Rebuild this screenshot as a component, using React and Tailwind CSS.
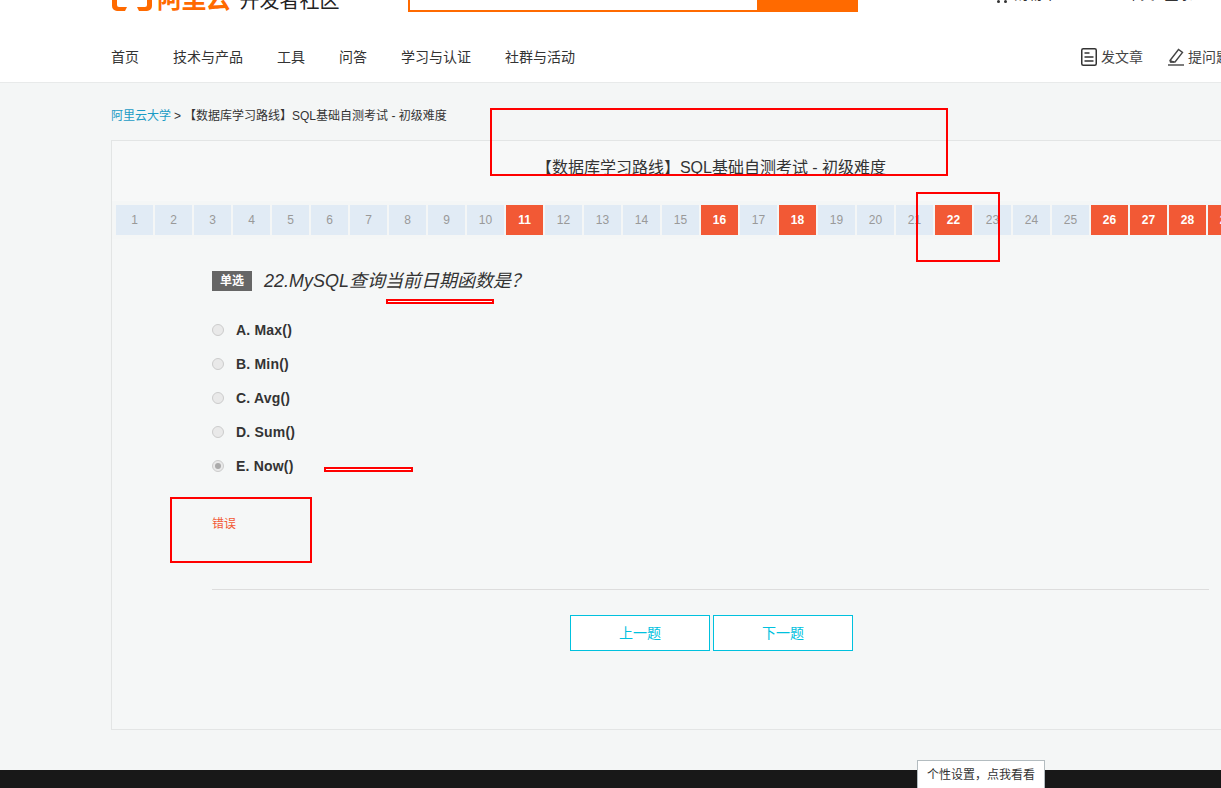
import React from "react";

const FONT = "font-['Liberation_Sans','Noto_Sans_CJK_SC',sans-serif]";
const ACTIVE = [11, 16, 18, 22, 26, 27, 28, 29];
const NAV = ["首页", "技术与产品", "工具", "问答", "学习与认证", "社群与活动"];
const OPTIONS = [
  { label: "A. Max()" },
  { label: "B. Min()" },
  { label: "C. Avg()" },
  { label: "D. Sum()" },
  { label: "E. Now()", checked: true },
];

const Logo = () => (
  <svg width="42" height="40" viewBox="0 0 42 40" className="shrink-0">
    <path
      d="M14 8H6a5 5 0 0 0-5 5v21a5 5 0 0 0 5 5h8l2-4H8a2 2 0 0 1-2-2V14a2 2 0 0 1 2-2h6zM28 8h8a5 5 0 0 1 5 5v21a5 5 0 0 1-5 5h-8l-2-4h8a2 2 0 0 0 2-2V14a2 2 0 0 0-2-2h-6z"
      fill="#ff6a00"
    />
  </svg>
);

const DocIcon = () => (
  <svg width="16" height="18" viewBox="0 0 16 18" fill="none" stroke="#333" className="shrink-0">
    <rect x="0.75" y="0.75" width="14.5" height="16.5" rx="1.5" strokeWidth="1.5" />
    <path d="M3.5 5h5M3.5 9h9M3.5 13h9" strokeWidth="1.5" />
  </svg>
);

const PenIcon = () => (
  <svg width="16" height="18" viewBox="0 0 16 18" fill="none" stroke="#444" className="shrink-0">
    <path d="M2 12.5 10.5 1.5l4 3L7 14H2.5z" strokeWidth="1.4" />
    <path d="M2.5 12.5 6 14 2.5 14z" fill="#444" />
    <path d="M0 17h16" strokeWidth="1.4" />
  </svg>
);

const Marker = ({ className }) => (
  <div className={`absolute border-2 border-[#ff0000] ${className}`} />
);

export default function App() {
  return (
    <div className={`relative h-[788px] w-[1221px] overflow-hidden bg-[#f4f6f6] text-[#333] ${FONT}`}>
      <header className="h-[83px] overflow-hidden border-b border-[#e8eaea] bg-white">
        <div className="-mt-[28px] flex h-[40px] items-end pl-[111px]">
          <Logo />
          <span className="ml-[4px] shrink-0 text-[25px] leading-[25px] font-bold tracking-[-0.5px] text-[#ff6a00]">阿里云</span>
          <span className="ml-[9px] shrink-0 text-[20px] leading-[22px] text-[#222]">开发者社区</span>
          <div className="ml-[68px] flex h-[40px] w-[450px] shrink-0">
            <div className="w-[349px] border-b-2 border-l-2 border-[#ff6a00] bg-white" />
            <div className="w-[101px] bg-[#ff6a00]" />
          </div>
          <div className="mb-[8px] ml-[139px] flex h-[30px] shrink-0 items-end text-[14px] leading-[20px] whitespace-nowrap text-[#333]">
            <span className="mb-[1px] flex w-[18px] gap-[4px]">
              <span className="h-[3px] w-[3px] rounded-full bg-[#333]" />
              <span className="h-[3px] w-[3px] rounded-full bg-[#333]" />
            </span>
            <span>购物车</span>
            <span className="ml-[70px]">中文</span>
            <span className="ml-[10px]">登录</span>
          </div>
        </div>
        <nav className="mt-[32px] flex h-[26px] items-center pl-[111px] text-[14px] whitespace-nowrap">
          {NAV.map((item) => (
            <a key={item} className="mr-[34px] shrink-0 leading-[26px] text-[#333]">
              {item}
            </a>
          ))}
          <a className="ml-[472px] flex shrink-0 items-center gap-[4px] text-[#444]">
            <DocIcon />
            发文章
          </a>
          <a className="ml-[25px] flex shrink-0 items-center gap-[4px] text-[#444]">
            <PenIcon />
            提问题
          </a>
        </nav>
      </header>

      <main className="pl-[111px]">
        <div className="flex h-[57px] items-center pt-[8px] text-[12px] text-[#333]">
          <a className="text-[#1b9bc5]">阿里云大学</a>
          <span className="mx-[3px]">&gt;</span>
          <span>【数据库学习路线】SQL基础自测考试 - 初级难度</span>
        </div>

        <section className="flex h-[590px] w-[1200px] flex-col border border-[#e3e5e5] bg-[#f7f8f8]">
          <h1 className="flex h-[60px] items-end justify-center pb-[23px] text-[16px] leading-[20px] font-normal text-[#333]">
            【数据库学习路线】SQL基础自测考试 - 初级难度
          </h1>

          <div className="flex h-[38px] gap-[2px] overflow-hidden bg-[#f4f6f6] py-[4px] pl-[4px]">
            {Array.from({ length: 30 }, (_, i) => i + 1).map((n) => (
              <div
                key={n}
                className={
                  ACTIVE.includes(n)
                    ? "flex h-[30px] w-[37px] shrink-0 items-center justify-center bg-[#f25935] text-[12px] font-bold text-white"
                    : "flex h-[30px] w-[37px] shrink-0 items-center justify-center bg-[#e1ebf5] text-[12px] text-[#999]"
                }
              >
                {n}
              </div>
            ))}
          </div>

          <div className="flex-1 bg-[#f5f7f7] pl-[100px] pr-[101px]">
            <div className="mb-[12px] mt-[22px] flex h-[40px] items-center">
              <span className="flex h-[20px] w-[40px] items-center justify-center bg-[#666] text-[12px] font-bold text-white">
                单选
              </span>
              <span className="ml-[12px] text-[18px] italic text-[#333]">22.MySQL查询当前日期函数是？</span>
            </div>

            <div className="flex flex-col">
              {OPTIONS.map((o) => (
                <label key={o.label} className="flex h-[34px] items-center gap-[12px]">
                  <span className="flex h-[12px] w-[12px] items-center justify-center rounded-full border border-[#ccc] bg-[#e9e9e9]">
                    {o.checked && <span className="h-[6px] w-[6px] rounded-full bg-[#aaa]" />}
                  </span>
                  <span className="text-[14px] font-bold tracking-[0.2px] text-[#333]">{o.label}</span>
                </label>
              ))}
            </div>

            <p className="mt-[32px] text-[12px] leading-[18px] text-[#f25935]">错误</p>

            <hr className="mt-[56px] border-[#ddd]" />

            <div className="ml-[358px] mt-[25px] flex gap-[3px]">
              <button className="flex h-[36px] w-[140px] items-center justify-center border border-[#00c1de] bg-white text-[14px] text-[#00c1de]">
                上一题
              </button>
              <button className="flex h-[36px] w-[140px] items-center justify-center border border-[#00c1de] bg-white text-[14px] text-[#00c1de]">
                下一题
              </button>
            </div>
          </div>
        </section>
      </main>

      <footer className="mt-[40px] h-[60px] bg-[#181818]" />

      <div className="absolute left-[917px] top-[760px] flex h-[40px] w-[128px] justify-center border border-[#b3bcc0] bg-white pt-[5px] text-[12px] text-[#333]">
        个性设置，点我看看
      </div>

      <Marker className="left-[490px] top-[108px] h-[68px] w-[458px]" />
      <Marker className="left-[916px] top-[192px] h-[70px] w-[84px]" />
      <Marker className="left-[170px] top-[497px] h-[66px] w-[142px]" />
      <Marker className="left-[386px] top-[299px] h-[5px] w-[108px] bg-white" />
      <Marker className="left-[324px] top-[467px] h-[5px] w-[89px] bg-white" />
    </div>
  );
}
